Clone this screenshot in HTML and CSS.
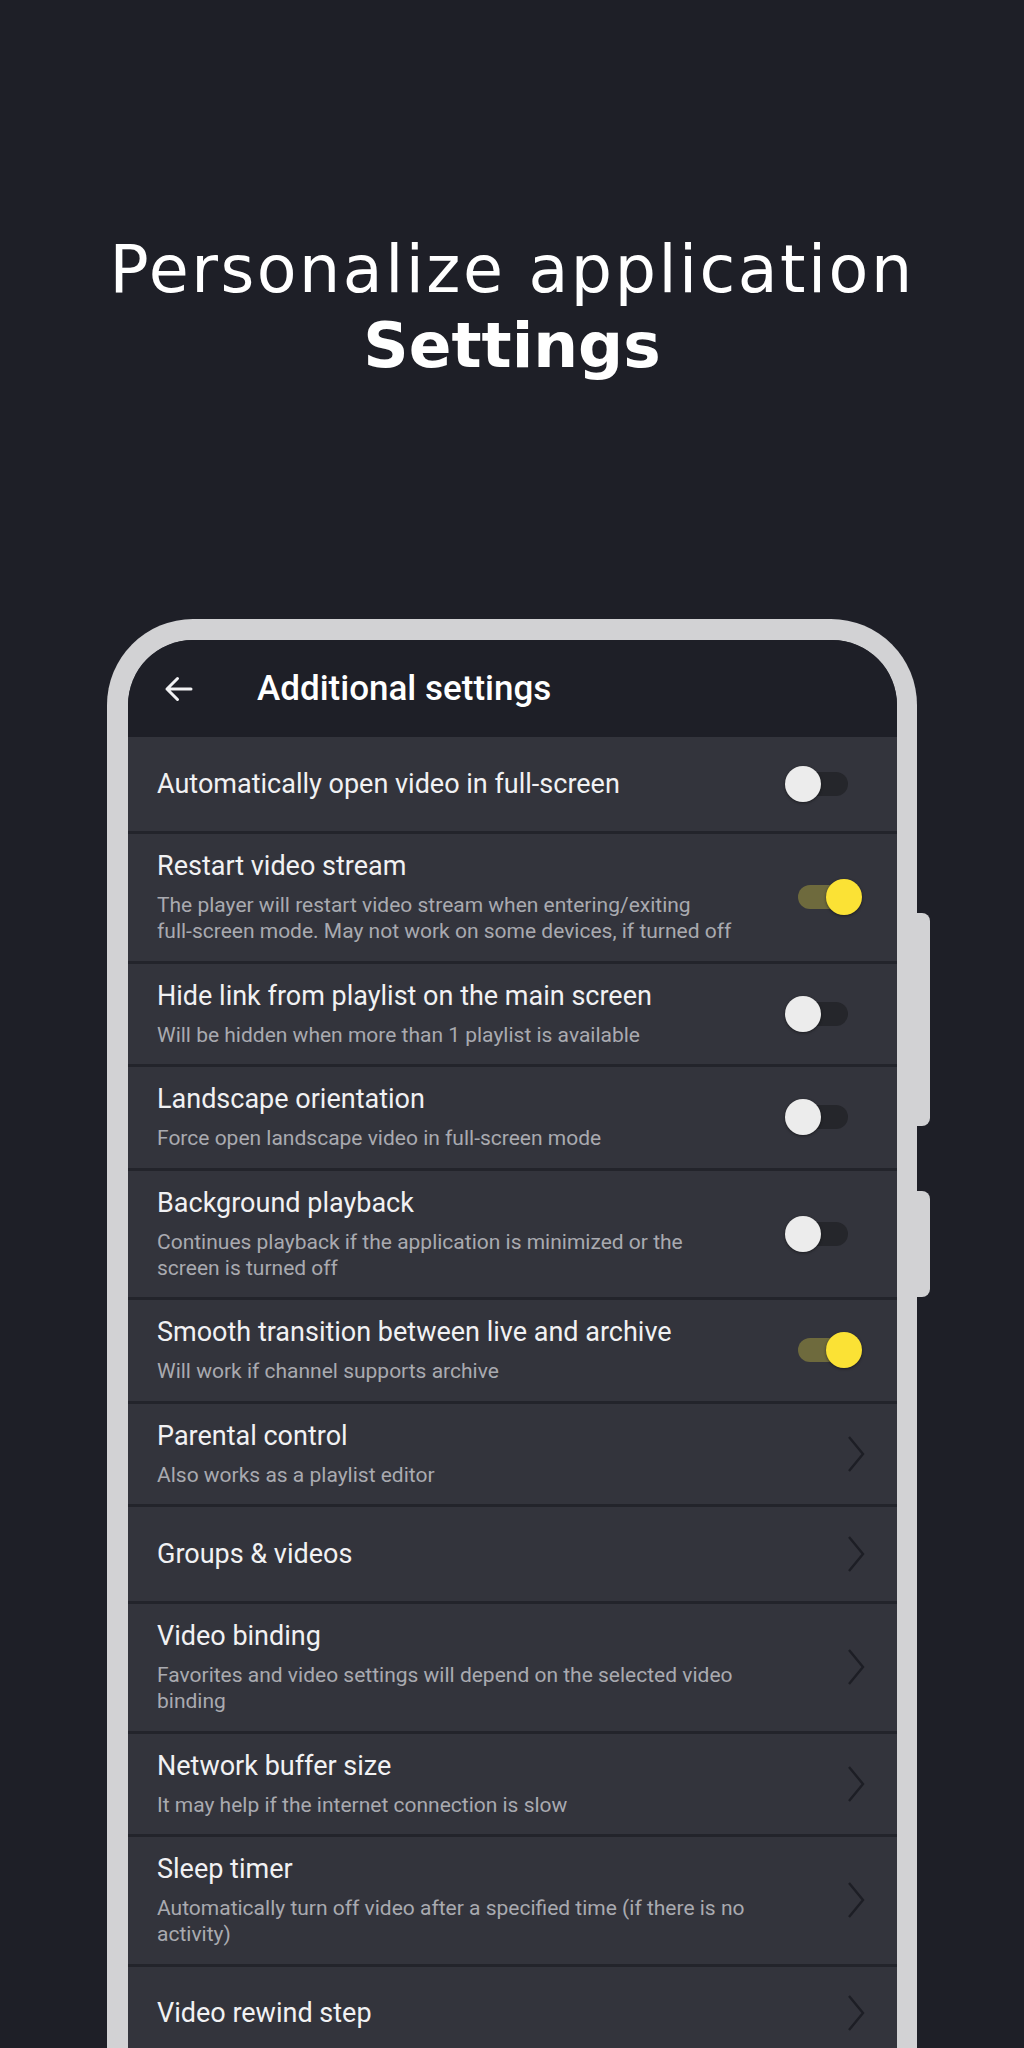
FILE: index.html
```html
<!DOCTYPE html>
<html lang="en">
<head>
<meta charset="utf-8">
<title>Personalize application Settings</title>
<link rel="stylesheet" href="styles.css">
</head>
<body>
<div class="page">
  <h1 class="hero">
    <span class="hero-light">Personalize application</span>
    <span class="hero-bold">Settings</span>
  </h1>

  <div class="phone">
    <div class="side-btn side-btn-long"></div>
    <div class="side-btn side-btn-short"></div>
    <div class="screen">
      <header class="appbar">
        <svg class="back" width="30" height="30" viewBox="0 0 30 30">
          <path d="M28 15H4M14.5 4.5L4 15l10.5 10.5" fill="none" stroke="#f2f2f4" stroke-width="3" stroke-linecap="round" stroke-linejoin="round"/>
        </svg>
        <h2 class="appbar-title">Additional settings</h2>
      </header>

      <ul class="list">
        <li class="item">
          <div class="text"><div class="title">Automatically open video in full-screen</div></div>
          <div class="switch"><span class="track"></span><span class="knob"></span></div>
        </li>
        <li class="item">
          <div class="text">
            <div class="title">Restart video stream</div>
            <div class="sub">The player will restart video stream when entering/exiting <span class="nowrap">full-screen</span> mode. May not work on some devices, if turned off</div>
          </div>
          <div class="switch on"><span class="track"></span><span class="knob"></span></div>
        </li>
        <li class="item">
          <div class="text">
            <div class="title">Hide link from playlist on the main screen</div>
            <div class="sub">Will be hidden when more than 1 playlist is available</div>
          </div>
          <div class="switch"><span class="track"></span><span class="knob"></span></div>
        </li>
        <li class="item">
          <div class="text">
            <div class="title">Landscape orientation</div>
            <div class="sub">Force open landscape video in full-screen mode</div>
          </div>
          <div class="switch"><span class="track"></span><span class="knob"></span></div>
        </li>
        <li class="item">
          <div class="text">
            <div class="title">Background playback</div>
            <div class="sub">Continues playback if the application is minimized or the screen is turned off</div>
          </div>
          <div class="switch"><span class="track"></span><span class="knob"></span></div>
        </li>
        <li class="item">
          <div class="text">
            <div class="title">Smooth transition between live and archive</div>
            <div class="sub">Will work if channel supports archive</div>
          </div>
          <div class="switch on"><span class="track"></span><span class="knob"></span></div>
        </li>
        <li class="item nav">
          <div class="text">
            <div class="title">Parental control</div>
            <div class="sub">Also works as a playlist editor</div>
          </div>
          <svg class="chev" width="18" height="36" viewBox="0 0 18 36"><path d="M2 1L16 18L2 35" fill="none" stroke="#1d1e25" stroke-width="2.4"/></svg>
        </li>
        <li class="item nav">
          <div class="text"><div class="title">Groups &amp; videos</div></div>
          <svg class="chev" width="18" height="36" viewBox="0 0 18 36"><path d="M2 1L16 18L2 35" fill="none" stroke="#1d1e25" stroke-width="2.4"/></svg>
        </li>
        <li class="item nav">
          <div class="text">
            <div class="title">Video binding</div>
            <div class="sub">Favorites and video settings will depend on the selected video binding</div>
          </div>
          <svg class="chev" width="18" height="36" viewBox="0 0 18 36"><path d="M2 1L16 18L2 35" fill="none" stroke="#1d1e25" stroke-width="2.4"/></svg>
        </li>
        <li class="item nav">
          <div class="text">
            <div class="title">Network buffer size</div>
            <div class="sub">It may help if the internet connection is slow</div>
          </div>
          <svg class="chev" width="18" height="36" viewBox="0 0 18 36"><path d="M2 1L16 18L2 35" fill="none" stroke="#1d1e25" stroke-width="2.4"/></svg>
        </li>
        <li class="item nav">
          <div class="text">
            <div class="title">Sleep timer</div>
            <div class="sub">Automatically turn off video after a specified time (if there is no activity)</div>
          </div>
          <svg class="chev" width="18" height="36" viewBox="0 0 18 36"><path d="M2 1L16 18L2 35" fill="none" stroke="#1d1e25" stroke-width="2.4"/></svg>
        </li>
        <li class="item nav">
          <div class="text"><div class="title">Video rewind step</div></div>
          <svg class="chev" width="18" height="36" viewBox="0 0 18 36"><path d="M2 1L16 18L2 35" fill="none" stroke="#1d1e25" stroke-width="2.4"/></svg>
        </li>
      </ul>
    </div>
  </div>
</div>
</body>
</html>
```

FILE: styles.css
```css
* { box-sizing: border-box; }

html, body {
  margin: 0;
  padding: 0;
  background: #1e1f27;
}

body {
  width: 1024px;
  height: 2048px;
  overflow: hidden;
}

.page {
  padding-top: 232px;
}

.hero {
  margin: 0;
  text-align: center;
  color: #ffffff;
  font-family: "DejaVu Sans", "Open Sans", sans-serif;
  font-size: 63px;
  line-height: 76px;
}

.hero-light {
  display: block;
  font-size: 65px;
  font-weight: 400;
  letter-spacing: 2.5px;
}

.hero-bold {
  display: block;
  font-weight: 700;
}

.phone {
  position: relative;
  margin: 235px 0 0 107px;
  width: 810px;
  border: solid #d2d2d4;
  border-width: 21px 20px 0 21px;
  border-radius: 86px 86px 0 0;
  background: #d2d2d4;
}

.side-btn {
  position: absolute;
  right: -33px;
  width: 14px;
  background: #d2d2d4;
  border-radius: 0 8px 8px 0;
}

.side-btn-long {
  top: 273px;
  height: 213px;
}

.side-btn-short {
  top: 551px;
  height: 106px;
}

.screen {
  border-radius: 65px 65px 0 0;
  overflow: hidden;
  background: #33343c;
  font-family: Roboto, "Liberation Sans", sans-serif;
}

.appbar {
  display: flex;
  align-items: center;
  height: 97px;
  padding-left: 35px;
  background: #1e1f27;
}

.back {
  display: block;
  flex: none;
}

.appbar-title {
  margin: 0 0 0 64px;
  color: #ffffff;
  font-size: 35px;
  font-weight: 500;
  line-height: 40px;
}

.list {
  list-style: none;
  margin: 0;
  padding: 0;
}

.item {
  display: flex;
  align-items: center;
  min-height: 97px;
  padding: 16px 35px 16.5px 29px;
  border-bottom: 3px solid #23242b;
  background: #33343c;
}

.item.nav {
  padding-right: 32px;
}

.text {
  flex: 1;
  min-width: 0;
}

.title {
  color: #f1f1f3;
  font-size: 27px;
  line-height: 32px;
}

.sub {
  max-width: 590px;
  margin-top: 10px;
  color: #a9aab0;
  font-size: 21px;
  line-height: 26px;
}

.nowrap {
  white-space: nowrap;
}

.switch {
  position: relative;
  flex: none;
  width: 77px;
  height: 36px;
}

.track {
  position: absolute;
  left: 13px;
  top: 6px;
  width: 50px;
  height: 24px;
  border-radius: 12px;
  background: #25262b;
}

.knob {
  position: absolute;
  left: 0;
  top: 0;
  width: 36px;
  height: 36px;
  border-radius: 50%;
  background: #ececec;
  box-shadow: 0 1px 3px rgba(0, 0, 0, 0.45);
}

.switch.on .track {
  background: #6e6a3d;
}

.switch.on .knob {
  left: 41px;
  background: #fbe235;
}

.chev {
  display: block;
  flex: none;
}
```
